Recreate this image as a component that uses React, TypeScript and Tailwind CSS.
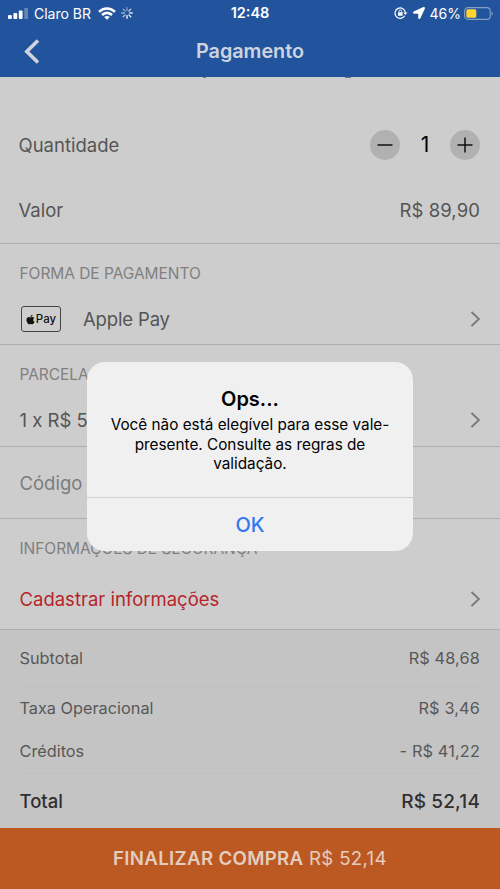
import type { ReactNode } from 'react'
import { FaApple, FaLocationArrow } from 'react-icons/fa'

function SignalIcon() {
    return (
        <svg width="20" height="11" viewBox="0 0 20 11" fill="#fff">
            <rect x="0" y="7" width="3.8" height="4" rx="1" />
            <rect x="5.4" y="5" width="3.8" height="6" rx="1" />
            <rect x="10.8" y="2.5" width="3.8" height="8.5" rx="1" />
            <rect x="16.2" y="0" width="3.8" height="11" rx="1" opacity="0.3" />
        </svg>
    )
}

function WifiIcon() {
    return (
        <svg width="18" height="13" viewBox="0 0 18 13" fill="none" stroke="#fff" strokeWidth="2.6">
            <path d="M1 4.9C5.5 0.3 12.5 0.3 17 4.9" />
            <path d="M4 8C6.9 5.1 11.1 5.1 14 8" />
            <path d="M9 12.8L6.2 10C7.8 8.5 10.2 8.5 11.8 10Z" fill="#fff" stroke="none" />
        </svg>
    )
}

const SPOKES = [1, 0.95, 0.85, 0.75, 0.45, 0.5, 0.55, 0.65]

function SpinnerIcon() {
    return (
        <svg width="12" height="12" viewBox="0 0 12 12" stroke="#fff" strokeWidth="1.3" strokeLinecap="round">
            {SPOKES.map((opacity, i) => (
                <path key={i} d="M6 8.6V11.3" opacity={opacity} transform={`rotate(${i * -45} 6 6)`} />
            ))}
        </svg>
    )
}

function RotationLockIcon() {
    return (
        <svg width="14" height="12" viewBox="0 0 14 12" fill="none" stroke="#fff" strokeWidth="1.2">
            <path d="M10.7 8.8A5.2 5.2 0 1 1 11.4 5.6" />
            <path d="M9.3 5.4H13.5L11.4 8Z" fill="#fff" stroke="none" />
            <rect x="4" y="5.2" width="4.6" height="3.6" rx="0.5" fill="#fff" stroke="none" />
            <path d="M4.9 5.4V4.4a1.4 1.4 0 0 1 2.8 0V5.4" strokeWidth="0.9" />
        </svg>
    )
}

function BatteryIcon() {
    return (
        <svg width="30" height="13" viewBox="0 0 30 13" fill="none">
            <rect x="0.6" y="0.6" width="25.6" height="11.8" rx="3.4" stroke="#fff" strokeOpacity="0.45" strokeWidth="1.1" />
            <rect x="2.3" y="2.2" width="10" height="8.6" rx="1.6" fill="#fdd433" />
            <path d="M27.6 4.4C29.2 5 29.2 8 27.6 8.6Z" fill="#fff" fillOpacity="0.5" />
        </svg>
    )
}

function Chevron() {
    return (
        <svg width="10" height="16" viewBox="0 0 10 16" fill="none" stroke="#777" strokeWidth="1.8">
            <path d="M1.5 1L9 8L1.5 15" />
        </svg>
    )
}

function SectionTitle({ children }: { children: ReactNode }) {
    return <h2 className="-ml-[0.5px] text-[15.5px] leading-5 tracking-[-0.05px] whitespace-nowrap text-[#808080]">{children}</h2>
}

function SummaryRow({ label, value }: { label: string; value: string }) {
    return (
        <div className="flex items-center justify-between text-[16.3px] leading-6 text-[#585858]">
            <span className="-ml-[0.5px]">{label}</span>
            <span className="tracking-[0.15px]">{value}</span>
        </div>
    )
}

export default function App() {
    return (
        <div className="relative flex h-[889px] w-[500px] flex-col overflow-hidden bg-[#cdcdcd] font-['Inter','Liberation_Sans',sans-serif] text-[#555]">
            <header className="h-[77px] shrink-0 bg-[#22549d] text-white">
                {/* Status bar */}
                <div className="grid h-[26px] grid-cols-[1fr_auto_1fr] items-center pr-[6px] pl-2 text-[14px]">
                    <div className="flex items-center">
                        <SignalIcon />
                        <span className="mr-[7px] ml-[6px]">Claro BR</span>
                        <WifiIcon />
                        <span className="ml-[5px]">
                            <SpinnerIcon />
                        </span>
                    </div>
                    <span className="-ml-[2px] text-[14.5px] font-semibold">12:48</span>
                    <div className="flex items-center justify-end">
                        <RotationLockIcon />
                        <FaLocationArrow className="mr-[5px] ml-[5px] h-[12px] w-[12px]" />
                        <span className="mr-[3px]">46%</span>
                        <BatteryIcon />
                    </div>
                </div>
                <div className="grid h-[50px] grid-cols-[1fr_auto_1fr] items-center px-6">
                    <svg width="16" height="25" viewBox="0 0 16 25" fill="none" stroke="#d0d5dd" strokeWidth="3.6">
                        <path d="M14 1.5L2.8 12.5L14 23.5" />
                    </svg>
                    <h1 className="pt-[2px] text-[19.8px] font-semibold text-[#ced4df]">Pagamento</h1>
                </div>
            </header>

            <section className="relative flex h-[167px] shrink-0 flex-col border-b border-[#adadad] px-5 pt-[50px]">
                {/* Descenders of the line scrolled under the header */}
                <span className="absolute top-0 left-[203px] h-px w-[3px] bg-[#66738c]" />
                <span className="absolute top-0 left-[345px] h-px w-[6px] bg-[#66738c]" />
                <div className="flex h-9 items-center justify-between text-[18.5px]">
                    <span className="-ml-[1.5px] pt-[2px]">Quantidade</span>
                    <div className="flex items-center">
                        <button className="flex h-[30px] w-[30px] items-center justify-center rounded-full bg-[#b1b1b1]">
                            <svg width="16" height="16" viewBox="0 0 16 16" stroke="#111" strokeWidth="1.5">
                                <path d="M0.5 8H15.5" />
                            </svg>
                        </button>
                        <span className="w-[50px] text-center text-[21px] text-black">1</span>
                        <button className="flex h-[30px] w-[30px] items-center justify-center rounded-full bg-[#b1b1b1]">
                            <svg width="16" height="16" viewBox="0 0 16 16" stroke="#111" strokeWidth="1.5">
                                <path d="M0.5 8H15.5M8 0.5V15.5" />
                            </svg>
                        </button>
                    </div>
                </div>
                <div className="mt-[30px] flex h-9 items-center justify-between text-[18.5px]">
                    <span className="-ml-[1.5px]">Valor</span>
                    <span className="tracking-[0.1px]">R$ 89,90</span>
                </div>
            </section>

            <section className="h-[101px] shrink-0 border-b border-[#adadad] px-5 pt-5">
                <SectionTitle>FORMA DE PAGAMENTO</SectionTitle>
                <div className="mt-[21px] flex h-7 items-center text-[18.5px]">
                    <span className="ml-px flex h-[26px] w-10 items-center justify-center rounded-[3px] border-[1.5px] border-[#444] text-[11.5px] leading-none font-medium text-[#111]">
                        <FaApple className="mr-px h-[11px] w-[9px]" />
                        <span className="pt-px">Pay</span>
                    </span>
                    <span className="ml-[22px] flex-1 pt-[2px] tracking-[-0.15px]">Apple Pay</span>
                    <Chevron />
                </div>
            </section>

            <section className="h-[102px] shrink-0 border-b border-[#adadad] px-5 pt-5">
                <SectionTitle>PARCELAS</SectionTitle>
                <div className="mt-[21px] flex h-7 items-center justify-between text-[18.5px]">
                    <span className="-ml-[0.5px] pt-[2px]">1 x R$ 52,14</span>
                    <Chevron />
                </div>
            </section>

            <section className="flex h-[72px] shrink-0 items-center border-b border-[#adadad] px-5 pt-[2px] text-[18.5px] text-[#7c7c7c]">
                <span className="-ml-[0.5px]">Código</span>
            </section>

            <section className="h-[111px] shrink-0 border-b border-[#adadad] px-5 pt-5">
                <SectionTitle>INFORMAÇÕES DE SEGURANÇA</SectionTitle>
                <div className="mt-[26px] flex h-7 items-center justify-between text-[18.5px]">
                    <span className="-ml-[0.5px] pt-[2px] text-[#b6252b]">Cadastrar informações</span>
                    <Chevron />
                </div>
            </section>

            <section className="h-[198px] shrink-0 bg-[#c4c4c4] px-5 pt-4">
                <SummaryRow label="Subtotal" value="R$ 48,68" />
                <div className="mt-4 flex flex-col gap-[19px] border-y border-[#bfbfbf] pt-[9px] pb-[10px]">
                    <SummaryRow label="Taxa Operacional" value="R$ 3,46" />
                    <SummaryRow label="Créditos" value="- R$ 41,22" />
                </div>
                <div className="mt-[15px] flex items-baseline justify-between text-[18.5px] leading-6 font-medium text-[#303030]">
                    <span className="-ml-[0.5px]">Total</span>
                    <span className="text-[19px] tracking-[0.15px]">R$ 52,14</span>
                </div>
            </section>

            <button className="h-[61px] shrink-0 bg-[#bc5922] pt-[2px] text-[18.7px] tracking-[0.3px] text-[#e3cdbf]">
                <span className="font-semibold">FINALIZAR COMPRA</span> R$ 52,14
            </button>

            {/* Alert */}
            <div className="absolute top-[362px] left-[87px] flex h-[189px] w-[326px] flex-col rounded-[18px] bg-[#f0f0f0] text-center text-black">
                <div className="h-[135px] pt-[25px]">
                    <h3 className="text-[20px] leading-6 font-semibold">Ops...</h3>
                    <p className="mt-1 text-[15.3px] leading-[19.5px] whitespace-nowrap">
                        Você não está elegível para esse vale-
                        <br />
                        presente. Consulte as regras de
                        <br />
                        validação.
                    </p>
                </div>
                <button className="flex-1 border-t border-[#d0d0d0] text-[20px] font-medium text-[#3478f0]">OK</button>
            </div>
        </div>
    )
}
